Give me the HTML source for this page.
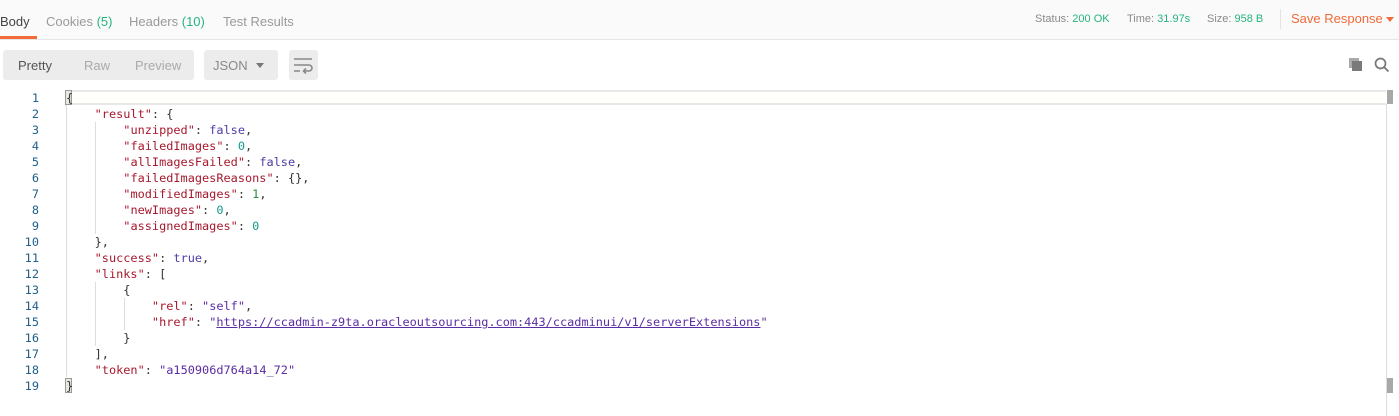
<!DOCTYPE html>
<html><head><meta charset="utf-8"><style>
*{margin:0;padding:0;box-sizing:border-box}
body{width:1399px;height:416px;background:#fff;font-family:"Liberation Sans",sans-serif;position:relative;overflow:hidden}
.top{position:absolute;left:0;top:0;width:1399px;height:40px;background:#fafafa;border-bottom:1px solid #e6e6e6}
.tab{position:absolute;top:14px;font-size:13px;color:#9a9a9a}
.g{color:#26b47f}
.ul{position:absolute;left:0;top:36px;width:37px;height:3px;background:#f26b3a}
.st{position:absolute;top:13px;font-size:11px;color:#8a8a8a}
.btn{position:absolute;top:50px;height:30px;background:#ececec;border-radius:3px;font-size:13px;color:#aaa}
.code{position:absolute;left:0;top:90px;font-family:"DejaVu Sans Mono","Liberation Mono",monospace;font-size:11.9px;line-height:16px;white-space:pre}
.ln{position:absolute;left:0;width:39px;text-align:right;color:#1f5f8a}
.k{color:#a6192e}.s{color:#5b2da3}.b{color:#4b3ea6}.n0{color:#149b8e}.n1{color:#2e8b3a}.p{color:#333}
.guide{position:absolute;width:1px;background:#ddd}
</style></head><body>
<div class="top">
<div class="tab" style="left:0;color:#444">Body</div>
<div class="tab" style="left:46px">Cookies <span class="g">(5)</span></div>
<div class="tab" style="left:129px">Headers <span class="g">(10)</span></div>
<div class="tab" style="left:223px">Test Results</div>
<div class="ul"></div>
<div class="st" style="left:1035px">Status: <span class="g">200 OK</span></div>
<div class="st" style="left:1127px">Time: <span class="g">31.97s</span></div>
<div class="st" style="left:1207px">Size: <span class="g">958 B</span></div>
<div style="position:absolute;left:1280px;top:9px;width:1px;height:20px;background:#e3e3e3"></div>
<div style="position:absolute;left:1291px;top:11px;font-size:13px;color:#f26b3a">Save Response</div>
<div style="position:absolute;left:1386px;top:17px;border-left:4px solid transparent;border-right:4px solid transparent;border-top:5px solid #f26b3a"></div>
</div>
<div class="btn" style="left:3px;width:191px"><span style="position:absolute;left:15px;top:8px;color:#555">Pretty</span><span style="position:absolute;left:81px;top:8px">Raw</span><span style="position:absolute;left:132px;top:8px">Preview</span></div>
<div class="btn" style="left:204px;width:74px"><span style="position:absolute;left:9px;top:8px;color:#888">JSON</span><span style="position:absolute;left:52px;top:13px;border-left:4px solid transparent;border-right:4px solid transparent;border-top:5px solid #777"></span></div>
<div class="btn" style="left:289px;width:29px"><svg width="29" height="30" style="position:absolute;left:0;top:0"><g stroke="#888" stroke-width="1.6" fill="none"><path d="M5 9h18M5 15h15a3 3 0 0 1 0 6h-5M5 21h6"/><path d="M17 18.5l-2.5 2.5 2.5 2.5"/></g></svg></div>
<svg width="16" height="16" style="position:absolute;left:1348px;top:57px"><rect x="1" y="1" width="10" height="10" fill="#aaa"/><rect x="4" y="4" width="10" height="10" fill="#7a7a7a"/></svg>
<svg width="16" height="16" style="position:absolute;left:1374px;top:57px"><circle cx="6.5" cy="6.5" r="5" stroke="#777" stroke-width="1.7" fill="none"/><path d="M10 10l4.5 4.5" stroke="#777" stroke-width="1.8"/></svg>
<div style="position:absolute;left:65px;top:90px;width:1321px;height:15px;background:#fffffb;border-top:2px solid #e8e8e8;border-bottom:2px solid #e8e8e8"></div>
<div style="position:absolute;left:1386px;top:104px;width:1px;height:312px;background:#ddd"></div>
<div style="position:absolute;left:1387px;top:90px;width:6px;height:14px;background:#a8a8a8"></div>
<div style="position:absolute;left:1387px;top:378px;width:6px;height:15px;background:#a8a8a8"></div>
<div style="position:absolute;left:65px;top:90px;width:7px;height:15px;border:1px solid #999;background:#e8e8e0"></div>
<div style="position:absolute;left:65px;top:378px;width:7px;height:15px;border:1px solid #999;background:#e8e8e0"></div>
<div class="guide" style="left:66px;top:105px;height:272px"></div>
<div class="guide" style="left:95px;top:122px;height:112px"></div>
<div class="guide" style="left:95px;top:282px;height:64px"></div>
<div class="guide" style="left:124px;top:298px;height:32px"></div>
<div class="code">
<div class="ln" style="top:0">1</div><div class="ln" style="top:16px">2</div><div class="ln" style="top:32px">3</div><div class="ln" style="top:48px">4</div><div class="ln" style="top:64px">5</div><div class="ln" style="top:80px">6</div><div class="ln" style="top:96px">7</div><div class="ln" style="top:112px">8</div><div class="ln" style="top:128px">9</div><div class="ln" style="top:144px">10</div><div class="ln" style="top:160px">11</div><div class="ln" style="top:176px">12</div><div class="ln" style="top:192px">13</div><div class="ln" style="top:208px">14</div><div class="ln" style="top:224px">15</div><div class="ln" style="top:240px">16</div><div class="ln" style="top:256px">17</div><div class="ln" style="top:272px">18</div><div class="ln" style="top:288px">19</div>
<div class="p" style="position:absolute;left:66px;top:0">{
    <span class="k">"result"</span>: {
        <span class="k">"unzipped"</span>: <span class="b">false</span>,
        <span class="k">"failedImages"</span>: <span class="n0">0</span>,
        <span class="k">"allImagesFailed"</span>: <span class="b">false</span>,
        <span class="k">"failedImagesReasons"</span>: {},
        <span class="k">"modifiedImages"</span>: <span class="n1">1</span>,
        <span class="k">"newImages"</span>: <span class="n0">0</span>,
        <span class="k">"assignedImages"</span>: <span class="n0">0</span>
    },
    <span class="k">"success"</span>: <span class="b">true</span>,
    <span class="k">"links"</span>: [
        {
            <span class="k">"rel"</span>: <span class="s">"self"</span>,
            <span class="k">"href"</span>: <span class="s">"<span style="text-decoration:underline">https://ccadmin-z9ta.oracleoutsourcing.com:443/ccadminui/v1/serverExtensions</span>"</span>
        }
    ],
    <span class="k">"token"</span>: <span class="s">"a150906d764a14_72"</span>
}</div>
</div>
</body></html>
